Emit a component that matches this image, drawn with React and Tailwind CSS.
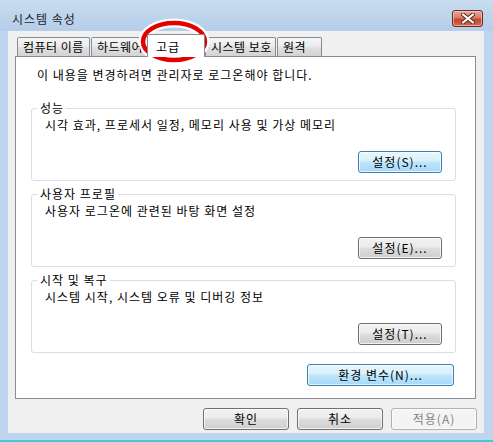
import React from "react";

const font = "font-['Noto_Sans_CJK_KR','Liberation_Sans',sans-serif]";

const WinButton = ({ label, variant = "normal", className = "" }) => {
  const styles = {
    normal:
      "border-[#707070] bg-[linear-gradient(#f2f2f2_0%,#ebebeb_45%,#dddddd_50%,#cfcfcf_100%)] text-[#000]",
    blue: "border-[#3c7fb1] bg-[linear-gradient(#eaf6fd_0%,#d9f0fc_45%,#bee6fd_50%,#a7d9f5_100%)] text-[#000]",
    disabled: "border-[#adb2b5] bg-[#f4f4f4] text-[#838383]",
  };
  return (
    <div
      className={`h-[22px] flex items-center justify-center rounded-[3px] border text-[12px] leading-[14px] tracking-[1px] shadow-[inset_0_0_0_1px_rgba(255,255,255,0.7)] ${styles[variant]} ${className}`}
    >
      {label}
    </div>
  );
};

const GroupBox = ({ title, text, button, buttonVariant, className = "" }) => (
  <div
    className={`relative ml-[15px] w-[425px] h-[73px] rounded-[3px] border border-[#d5dfe5] flex flex-col ${className}`}
  >
    <span className="absolute -top-[8px] left-[5px] bg-white pl-[3px] pr-[2px] text-[12px] leading-[14px] tracking-[1px]">
      {title}
    </span>
    <p className="pt-[9px] pl-[13px] text-[12px] leading-[14px] tracking-[1px]">{text}</p>
    <div className="flex justify-end mt-[19px] mr-[13px]">
      <WinButton label={button} variant={buttonVariant} className="w-[84px]" />
    </div>
  </div>
);

const tabs = [
  { label: "컴퓨터 이름", w: "w-[73px]" },
  { label: "하드웨어", w: "w-[56px]" },
  { label: "고급", w: "w-[58px]", active: true },
  { label: "시스템 보호", w: "w-[71px]" },
  { label: "원격", w: "w-[45px]" },
];

export default function App() {
  return (
    <div
      className={`relative w-[493px] h-[442px] flex flex-col bg-[#bfd5ed] border-b-[2px] border-b-[#3fc9dc] text-[#000] ${font}`}
    >
      {/* Title bar */}
      <div className="h-[31px] flex items-center justify-between pl-[12px] pr-[10px] bg-[linear-gradient(#c9dcf0,#b5cde9)]">
        <span className="text-[12px] leading-[14px] tracking-[1px] text-[#1e1e1e] mt-[6px]">시스템 속성</span>
        <div className="mt-[5px] w-[31px] h-[17px] flex items-center justify-center rounded-[3px] border border-[#6b2a22] bg-[linear-gradient(#e8a89c_0%,#d87a68_45%,#c7442f_55%,#d06a4c_100%)] shadow-[inset_0_0_0_1px_rgba(255,210,200,0.6)]">
          <svg width="14" height="11" viewBox="0 0 14 11">
            <path d="M2 1.5 L12 9.5 M12 1.5 L2 9.5" stroke="#5a2a24" strokeWidth="4" strokeLinecap="round" />
            <path d="M2 1.5 L12 9.5 M12 1.5 L2 9.5" stroke="#ffffff" strokeWidth="2.2" strokeLinecap="round" />
          </svg>
        </div>
      </div>

      {/* Client area */}
      <div className="ml-[8px] w-[476px] h-[402px] bg-[#f0f0f0] flex flex-col px-[7px] pt-[3px]">
        {/* Tab strip */}
        <div className="h-[22px] flex items-end pl-[2px] gap-[1px]">
          {tabs.map((t) =>
            t.active ? (
              <div
                key={t.label}
                className={`${t.w} h-[23px] -mb-px -mx-[1px] relative z-10 flex items-start pt-[5px] pl-[8px] bg-white border border-b-0 border-[#898c95] rounded-t-[2px] text-[12px] leading-[14px] tracking-[1px]`}
              >
                {t.label}
              </div>
            ) : (
              <div
                key={t.label}
                className={`${t.w} h-[19px] flex items-center pl-[5px] border border-b-0 border-[#898c95] rounded-t-[2px] bg-[linear-gradient(#f6f6f6_0%,#ececec_45%,#dfdfdf_55%,#d3d3d3_100%)] text-[12px] leading-[14px] tracking-[0.5px] whitespace-nowrap overflow-hidden`}
              >
                {t.label}
              </div>
            )
          )}
        </div>

        {/* Tab panel */}
        <div className="w-[461px] h-[343px] bg-white border border-[#898c95] flex flex-col">
          <p className="pt-[11px] pl-[21px] text-[12px] leading-[14px] tracking-[1px]">
            이 내용을 변경하려면 관리자로 로그온해야 합니다.
          </p>
          <GroupBox
            className="mt-[26px]"
            title="성능"
            text="시각 효과, 프로세서 일정, 메모리 사용 및 가상 메모리"
            button="설정(S)..."
            buttonVariant="blue"
          />
          <GroupBox
            className="mt-[13px]"
            title="사용자 프로필"
            text="사용자 로그온에 관련된 바탕 화면 설정"
            button="설정(E)..."
          />
          <GroupBox
            className="mt-[13px]"
            title="시작 및 복구"
            text="시스템 시작, 시스템 오류 및 디버깅 정보"
            button="설정(T)..."
          />
          <div className="flex justify-end mt-[11px] mr-[21px]">
            <WinButton label="환경 변수(N)..." variant="blue" className="w-[147px]" />
          </div>
        </div>

        {/* Dialog buttons */}
        <div className="flex justify-end gap-[8px] mt-[9px]">
          <WinButton label="확인" className="w-[86px]" />
          <WinButton label="취소" className="w-[86px]" />
          <WinButton label="적용(A)" variant="disabled" className="w-[86px]" />
        </div>
      </div>

      {/* Red highlight ellipse around the 고급 tab */}
      <svg className="absolute left-[138px] top-[18px]" width="72" height="48" viewBox="0 0 72 48">
        <ellipse cx="36" cy="23.5" rx="31" ry="18.5" fill="none" stroke="#ffffff" strokeWidth="9" />
        <ellipse cx="36" cy="23.5" rx="31" ry="18.5" fill="none" stroke="#e30000" strokeWidth="4.5" />
      </svg>
    </div>
  );
}
